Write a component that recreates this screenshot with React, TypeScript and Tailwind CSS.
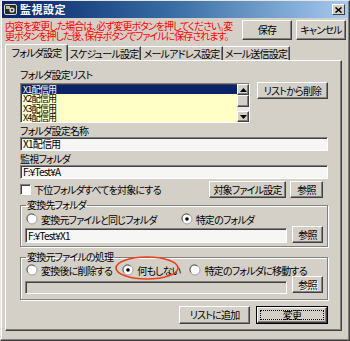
import React from "react";

const FONT = "font-['Noto_Sans_CJK_JP',sans-serif] [font-feature-settings:'palt'] tracking-[-0.8px]";
const BTN =
  "bg-[#d4d0c8] border border-t-white border-l-white border-r-[#404040] border-b-[#404040] shadow-[inset_-1px_-1px_0_#808080] flex items-center justify-center text-black text-[10px] leading-none whitespace-nowrap";
const SUNKEN =
  "border border-t-[#808080] border-l-[#808080] border-r-white border-b-white shadow-[inset_1px_1px_0_#404040]";
const GROUP =
  "border border-[#808080] shadow-[inset_1px_1px_0_#fff,1px_1px_0_#fff]";
const TAB =
  "h-[14px] border-t border-t-white border-r border-r-[#404040] shadow-[inset_-1px_0_0_#808080] flex items-center justify-center text-[10px] leading-none whitespace-nowrap";

function Radio({ checked = false }: { checked?: boolean }) {
  return (
    <svg width="12" height="12" viewBox="0 0 12 12" className="shrink-0">
      <circle cx="6" cy="6" r="5" fill="#fff" stroke="#a0a0a0" strokeWidth="1" />
      <path d="M2.2 8.5 A4.3 4.3 0 0 1 8.5 2.2" fill="none" stroke="#606060" strokeWidth="1" />
      {checked && <circle cx="6" cy="6" r="1.8" fill="#000" />}
    </svg>
  );
}

function Arrow({ up }: { up?: boolean }) {
  return (
    <svg width="7" height="4" viewBox="0 0 7 4">
      {up ? <path d="M0 4 L3.5 0 L7 4 Z" fill="#000" /> : <path d="M0 0 L3.5 4 L7 0 Z" fill="#000" />}
    </svg>
  );
}

const ROW = "h-[9.5px] flex items-center text-[9px] leading-[9px] pl-[1px] whitespace-nowrap";

export default function App() {
  return (
    <div
      className={`${FONT} w-[350px] h-[341px] bg-[#d4d0c8] border border-t-[#e8e6e0] border-l-[#e8e6e0] border-r-[#404040] border-b-[#404040] shadow-[inset_-1px_-1px_0_#808080,inset_1px_1px_0_#fff] overflow-hidden flex flex-col`}
    >
      {/* Title bar */}
      <div className="h-[17px] mx-[1px] bg-gradient-to-r from-[#0a246a] via-[#3a6ea5] to-[#a6caf0] flex items-center pl-[2px] pr-[3px] shrink-0">
        <svg width="13" height="13" viewBox="0 0 13 13" className="shrink-0">
          <rect x="0.5" y="1.5" width="12" height="10" rx="1.5" fill="#2a2a2a" stroke="#d8d8c8" />
          <rect x="2" y="3" width="4" height="3" fill="#c8c090" />
          <circle cx="8" cy="7" r="2.6" fill="#e8e8e0" />
          <circle cx="8" cy="7" r="1.3" fill="#304060" />
        </svg>
        <span className="ml-[3px] text-white text-[11px] leading-none font-bold tracking-[0.5px]">監視設定</span>
        <div className="ml-auto w-[13px] h-[11px] bg-[#d4d0c8] border border-t-white border-l-white border-r-[#404040] border-b-[#404040] flex items-center justify-center">
          <svg width="7" height="6" viewBox="0 0 7 6">
            <path d="M0.5 0.5 L6.5 5.5 M6.5 0.5 L0.5 5.5" stroke="#000" strokeWidth="1.5" />
          </svg>
        </div>
      </div>

      {/* Header: notice + buttons */}
      <div className="h-[26px] flex shrink-0">
        <div className="pl-[4px] pt-[3px] text-[#ff0000] text-[10px] leading-[10px] tracking-[-1px] w-[234px]">
          <div className="whitespace-nowrap">内容を変更した場合は、必ず変更ボタンを押してください。変</div>
          <div className="whitespace-nowrap">更ボタンを押した後、保存ボタンでファイルに保存されます。</div>
        </div>
        <div className="flex gap-[4px] pt-[2px] ml-auto pr-[3px]">
          <button className={`${BTN} w-[50px] h-[20px]`}>保存</button>
          <button className={`${BTN} w-[50px] h-[20px]`}>キャンセル</button>
        </div>
      </div>

      {/* Tabs */}
      <div className="h-[16px] flex items-end pl-[4px] shrink-0">
        <div className="relative z-10 h-[17px] -mb-[1px] w-[63px] bg-[#d4d0c8] border-t border-l border-t-white border-l-white border-r border-r-[#404040] shadow-[inset_-1px_0_0_#808080] flex items-center justify-center text-[10px] leading-none whitespace-nowrap rounded-t-[2px]">
          フォルダ設定
        </div>
        <div className={`${TAB} w-[73px]`}>スケジュール設定</div>
        <div className={`${TAB} w-[82px]`}>メールアドレス設定</div>
        <div className={`${TAB} w-[67px]`}>メール送信設定</div>
      </div>

      {/* Panel */}
      <div className="ml-[4px] w-[337px] h-[271px] border border-t-white border-l-white border-r-[#404040] border-b-[#404040] shadow-[inset_-1px_-1px_0_#808080] flex flex-col pl-[14px] text-[10px] text-black shrink-0">
        <div className="mt-[7px] h-[13px] leading-[13px]">フォルダ設定リスト</div>

        <div className="mt-[2px] flex items-start h-[40px]">
          <div className={`${SUNKEN} w-[230px] h-[40px] flex bg-[#ffffc6]`}>
            <div className="flex-1 pt-[1px] pl-[1px] flex flex-col">
              <div className={`${ROW} bg-[#0a246a] text-white`}>X1配信用</div>
              <div className={ROW}>X2配信用</div>
              <div className={ROW}>X3配信用</div>
              <div className={ROW}>X4配信用</div>
            </div>
            <div className="w-[12px] flex flex-col bg-[#ece9e2]">
              <div className={`${BTN} h-[11px]`}><Arrow up /></div>
              <div className="h-[12px] bg-[#d4d0c8] border border-t-white border-l-white border-r-[#404040] border-b-[#404040] shadow-[inset_-1px_-1px_0_#808080]" />
              <div className="flex-1" />
              <div className={`${BTN} h-[11px]`}><Arrow /></div>
            </div>
          </div>
          <button className={`${BTN} ml-[7px] -mt-[1px] w-[71px] h-[17px]`}>リストから削除</button>
        </div>

        <div className="mt-[1px] h-[13px] leading-[13px]">フォルダ設定名称</div>
        <div className={`${SUNKEN} w-[308px] h-[14px] bg-[#f6f6f4] pl-[2px] leading-[12px]`}>X1配信用</div>

        <div className="mt-[1px] h-[13px] leading-[13px]">監視フォルダ</div>
        <div className={`${SUNKEN} w-[308px] h-[14px] bg-[#f6f6f4] pl-[2px] leading-[12px]`}>F:¥Test¥A</div>

        <div className="mt-[2px] h-[17px] w-[303px] flex items-center">
          <div className={`${SUNKEN} w-[11px] h-[11px] bg-white`} />
          <span className="ml-[3px] whitespace-nowrap">下位フォルダすべてを対象にする</span>
          <button className={`${BTN} ml-auto w-[77px] h-[17px]`}>対象ファイル設定</button>
          <button className={`${BTN} ml-[4px] w-[33px] h-[17px]`}>参照</button>
        </div>

        {/* Group 1 */}
        <fieldset className={`${GROUP} mt-[1px] w-[308px] h-[48px] pl-[4px] pr-[4px] pb-[2px]`}>
          <legend className="ml-[1px] px-[1px] h-[12px] leading-[12px]">変換先フォルダ</legend>
          <div className="mt-[2px] h-[12px] flex items-center whitespace-nowrap">
            <div className="ml-[1px]"><Radio /></div>
            <span className="ml-[3px]">変換元ファイルと同じフォルダ</span>
            <div className="ml-[24px]"><Radio checked /></div>
            <span className="ml-[3px]">特定のフォルダ</span>
          </div>
          <div className="mt-[1px] h-[17px] flex items-end">
            <div className={`${SUNKEN} w-[262px] h-[15px] bg-[#f6f6f4] pl-[2px] leading-[13px]`}>F:¥Test¥X1</div>
            <button className={`${BTN} ml-[5px] w-[31px] h-[17px] self-start`}>参照</button>
          </div>
        </fieldset>

        {/* Group 2 */}
        <fieldset className={`${GROUP} mt-[4px] w-[308px] h-[49px] pl-[4px] pr-[4px]`}>
          <legend className="ml-[1px] px-[1px] h-[12px] leading-[12px]">変換元ファイルの処理</legend>
          <div className="mt-[1px] h-[12px] flex items-center whitespace-nowrap">
            <div className="ml-[1px]"><Radio /></div>
            <span className="ml-[3px]">変換後に削除する</span>
            <div className="relative ml-[10px] flex items-center">
              <Radio checked />
              <span className="ml-[3px]">何もしない</span>
              <svg
                width="66"
                height="26"
                viewBox="0 0 66 26"
                className="absolute left-[-8px] top-[-8px] pointer-events-none"
              >
                <ellipse cx="33" cy="13" rx="31" ry="11" fill="none" stroke="#e8401a" strokeWidth="1.6" />
              </svg>
            </div>
            <div className="ml-[9px]"><Radio /></div>
            <span className="ml-[3px]">特定のフォルダに移動する</span>
          </div>
          <div className="h-[18px] flex items-end">
            <div className={`${SUNKEN} w-[262px] h-[13px] bg-[#d4d0c8]`} />
            <button className={`${BTN} ml-[5px] w-[31px] h-[17px] self-start text-[#a0a0a0] [text-shadow:1px_1px_0_#fff]`}>参照</button>
          </div>
        </fieldset>

        <div className="mt-[6px] w-[308px] flex justify-end gap-[6px]">
          <button className={`${BTN} w-[71px] h-[18px]`}>リストに追加</button>
          <button className="w-[72px] h-[18px] border border-black bg-[#d4d0c8] p-0">
            <div className="w-full h-full border border-t-white border-l-white border-r-[#404040] border-b-[#404040] shadow-[inset_-1px_-1px_0_#808080] flex items-center justify-center p-[2px]">
              <div className="w-full h-full border border-dotted border-black flex items-center justify-center text-[10px] leading-none">
                変更
              </div>
            </div>
          </button>
        </div>
      </div>
    </div>
  );
}
